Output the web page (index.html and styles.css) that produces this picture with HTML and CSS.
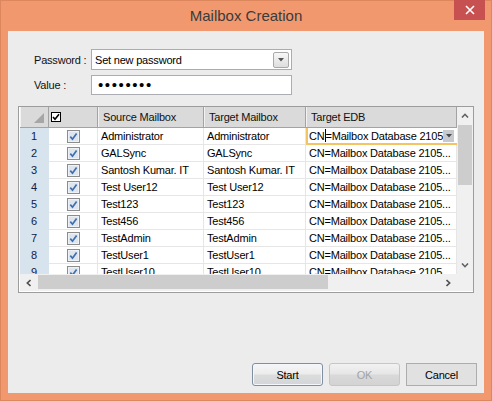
FILE: index.html
```html
<!DOCTYPE html>
<html lang="en">
<head>
  <meta charset="UTF-8" />
  <title>Mailbox Creation</title>
  <link rel="stylesheet" href="styles.css">
</head>
<body>

<div class="window">
  <div class="titlebar">
    <span></span>
    <div class="title">Mailbox Creation</div>
    <button class="close-btn">
      <svg width="10" height="10" viewBox="0 0 10 10"><path d="M1 1 L9 9 M9 1 L1 9" stroke="#fff" stroke-width="1.6"/></svg>
    </button>
  </div>

  <div class="panel">
    <div class="form">
      <label>Password :</label>
      <div class="combo">
        <span>Set new password</span>
        <span class="combo-btn">
          <svg width="6" height="4" viewBox="0 0 6 4"><path d="M0 0 H6 L3 3.5 Z" fill="#555"/></svg>
        </span>
      </div>
      <label>Value :</label>
      <div class="textbox">••••••••</div>
    </div>

    <div class="grid">
      <div class="grid-body">
        <div class="sheet" id="sheet">
          <div class="hcell corner-cell">
            <svg width="10" height="10" viewBox="0 0 10 10"><path d="M10 0 V10 H0 Z" fill="#a6a6a6"/></svg>
          </div>
          <div class="hcell chk-head">
            <svg width="10" height="10" viewBox="0 0 10 10"><rect x="0.5" y="0.5" width="9" height="9" fill="#fff" stroke="#000"/><path d="M2 5 L4 7.3 L8 2.3" stroke="#000" stroke-width="1.6" fill="none"/></svg>
          </div>
          <div class="hcell">Source Mailbox</div>
          <div class="hcell">Target Mailbox</div>
          <div class="hcell">Target EDB</div>
        </div>
        <div class="vscroll">
          <div class="sb-btn">
            <svg width="8" height="5" viewBox="0 0 8 5"><path d="M1 4.5 L4 1.3 L7 4.5" stroke="#606060" stroke-width="1.6" fill="none"/></svg>
          </div>
          <div class="sb-track"><div class="vthumb"></div></div>
          <div class="sb-btn">
            <svg width="8" height="5" viewBox="0 0 8 5"><path d="M1 0.5 L4 3.7 L7 0.5" stroke="#606060" stroke-width="1.6" fill="none"/></svg>
          </div>
        </div>
      </div>
      <div class="hscroll-row">
        <div class="hscroll">
          <div class="sb-btn-h">
            <svg width="5" height="8" viewBox="0 0 5 8"><path d="M4.5 1 L1.3 4 L4.5 7" stroke="#505050" stroke-width="1.6" fill="none"/></svg>
          </div>
          <div class="sb-track-h"><div class="hthumb"></div></div>
          <div class="sb-btn-h">
            <svg width="5" height="8" viewBox="0 0 5 8"><path d="M0.5 1 L3.7 4 L0.5 7" stroke="#505050" stroke-width="1.6" fill="none"/></svg>
          </div>
        </div>
        <div class="corner"></div>
      </div>
    </div>

    <div class="actions">
      <button class="btn btn-start">Start</button>
      <button class="btn btn-ok" disabled>OK</button>
      <button class="btn btn-cancel">Cancel</button>
    </div>
  </div>
</div>

<script>
  const mailboxes = [
    ['Administrator', 'Administrator'],
    ['GALSync', 'GALSync'],
    ['Santosh Kumar. IT', 'Santosh Kumar. IT'],
    ['Test User12', 'Test User12'],
    ['Test123', 'Test123'],
    ['Test456', 'Test456'],
    ['TestAdmin', 'TestAdmin'],
    ['TestUser1', 'TestUser1'],
    ['TestUser10', 'TestUser10']
  ];

  const checkIcon = `<svg width="13" height="13" viewBox="0 0 13 13">
    <rect x="0.5" y="0.5" width="12" height="12" fill="#eef1f5" stroke="#8c8c8c"/>
    <rect x="2" y="2" width="9" height="9" fill="#dfe5ec"/>
    <path d="M3.3 6.6 L5.5 9.2 L9.6 3.4" stroke="#3d6fb0" stroke-width="1.7" fill="none"/>
  </svg>`;

  const sheet = document.getElementById('sheet');

  mailboxes.forEach((m, i) => {
    let edb = '<div class="cell">CN=Mailbox Database 2105...</div>';
    if (i === 0) {
      edb = `<div class="cell edit-cell">
        <span>CN<span class="caret"></span>=Mailbox Database 2105</span>
        <span class="edit-btn"><svg width="6" height="4" viewBox="0 0 6 4"><path d="M0 0 H6 L3 3.5 Z" fill="#4a4a4a"/></svg></span>
      </div>`;
    }
    sheet.insertAdjacentHTML('beforeend', `
      <div class="cell rowhdr">${i + 1}</div>
      <div class="cell chk-cell">${checkIcon}</div>
      <div class="cell">${m[0]}</div>
      <div class="cell">${m[1]}</div>
      ${edb}
    `);
  });
</script>

</body>
</html>
```

FILE: styles.css
```css
* { box-sizing: border-box; }

body {
  margin: 0;
  font-family: 'Liberation Sans', Arial, sans-serif;
  font-size: 11px;
  letter-spacing: -0.2px;
  color: #000;
}

.window {
  width: 492px;
  height: 401px;
  background: #f1986f;
  border: 1px solid #dd875f;
  display: flex;
  flex-direction: column;
  padding: 0 7px 7px;
}

.titlebar {
  height: 30px;
  display: grid;
  grid-template-columns: 1fr auto 1fr;
  align-items: start;
}

.title {
  font-size: 15px;
  letter-spacing: 0;
  line-height: 29px;
  color: #3b3b3b;
}

.close-btn {
  justify-self: end;
  width: 31px;
  height: 20px;
  margin-top: -1px;
  margin-right: -1px;
  border: none;
  padding: 0;
  background: #c75050;
  display: flex;
  align-items: center;
  justify-content: center;
}

.panel {
  flex: 1;
  background: #ececec;
  display: flex;
  flex-direction: column;
  padding: 18px 7px 7px 10px;
}

/* password form */
.form {
  display: grid;
  grid-template-columns: 57px 201px;
  row-gap: 5px;
  align-items: center;
  margin-left: 16px;
}

.form label {
  color: #111;
  white-space: nowrap;
}

.combo {
  height: 21px;
  border: 1px solid #acacac;
  background: #fff;
  display: flex;
  align-items: center;
  justify-content: space-between;
  padding: 0 2px 0 3px;
}

.combo-btn {
  width: 16px;
  height: 16px;
  border: 1px solid #a9a9a9;
  border-radius: 2px;
  background: linear-gradient(#f7f7f7, #dedede);
  display: flex;
  align-items: center;
  justify-content: center;
}

.textbox {
  height: 20px;
  border: 1px solid #abadb3;
  background: #fff;
  padding-left: 6px;
  font-size: 15px;
  line-height: 17px;
  letter-spacing: 1.6px;
}

/* data grid */
.grid {
  margin-top: 11px;
  width: 456px;
  border: 1px solid #9c9c9c;
  background: #fff;
  padding: 0 0 1px 1px;
}

.grid-body {
  display: flex;
  height: 167px;
}

.sheet {
  width: 437px;
  overflow: hidden;
  display: grid;
  grid-template-columns: 29px 49px 106px 102px 151px;
  grid-template-rows: 21px;
  grid-auto-rows: 17px;
  align-content: start;
}

.hcell {
  background: #dadada;
  border-right: 1px solid #a3a3a3;
  border-bottom: 1px solid #a3a3a3;
  box-shadow: inset 1px 0 0 #f2f2f2;
  padding-left: 5px;
  display: flex;
  align-items: center;
  white-space: nowrap;
  overflow: hidden;
  color: #111;
}

.corner-cell {
  align-items: flex-end;
  justify-content: flex-end;
  padding: 0 4px 4px 0;
}

.chk-head {
  padding-left: 2px;
  box-shadow: none;
}

.cell {
  border-right: 1px solid #e6e6e6;
  border-bottom: 1px solid #e6e6e6;
  padding-left: 3px;
  display: flex;
  align-items: center;
  white-space: nowrap;
  overflow: hidden;
}

.rowhdr {
  background: #d7e3ed;
  border-color: #d7e3ed;
  justify-content: center;
  padding: 0;
  color: #10204a;
}

.chk-cell {
  justify-content: center;
  padding: 0;
}

.edit-cell {
  border-left: 2px solid #f4c462;
  border-bottom: 2px solid #f4c462;
  border-right: none;
  padding: 0 3px 0 1px;
  justify-content: space-between;
}

.caret {
  display: inline-block;
  width: 1px;
  height: 13px;
  background: #000;
  vertical-align: -2px;
}

.edit-btn {
  width: 13px;
  height: 12px;
  background: #c6cacf;
  display: flex;
  align-items: center;
  justify-content: center;
}

/* scrollbars */
.vscroll {
  width: 16px;
  background: #f0f0f0;
  display: flex;
  flex-direction: column;
}

.sb-btn {
  height: 17px;
  display: flex;
  align-items: center;
  justify-content: center;
}

.sb-track {
  flex: 1;
  padding: 1px 1px 0;
}

.vthumb {
  height: 60px;
  background: #cdcdcd;
}

.hscroll-row {
  display: flex;
  height: 17px;
}

.hscroll {
  width: 437px;
  background: #f0f0f0;
  display: flex;
}

.sb-btn-h {
  width: 17px;
  display: flex;
  align-items: center;
  justify-content: center;
}

.sb-track-h {
  flex: 1;
  padding: 1px 0 2px 1px;
}

.hthumb {
  width: 290px;
  height: 100%;
  background: #cdcdcd;
}

.corner {
  width: 16px;
  background: #f0f0f0;
}

/* buttons */
.actions {
  margin-top: auto;
  display: flex;
  justify-content: flex-end;
  gap: 6px;
}

.btn {
  width: 71px;
  height: 23px;
  font-family: 'Liberation Sans', Arial, sans-serif;
  font-size: 11px;
  letter-spacing: -0.2px;
  color: #000;
  padding: 0;
}

.btn-start {
  border: 1px solid #7f8ea3;
  border-radius: 3px;
  background: linear-gradient(#f6f6f6, #ececec 48%, #dcdcdc 52%, #d3d5d8);
  box-shadow: inset 0 0 0 1px #f4f8fc;
}

.btn-ok {
  border: 1px solid #c6c6c6;
  border-radius: 3px;
  background: linear-gradient(#f2f2f2, #e6e6e6 48%, #d9d9d9 52%, #d3d3d3);
  color: #a3a3a3;
}

.btn-cancel {
  border: 1px solid #adadad;
  background: #e1e1e1;
}
```
